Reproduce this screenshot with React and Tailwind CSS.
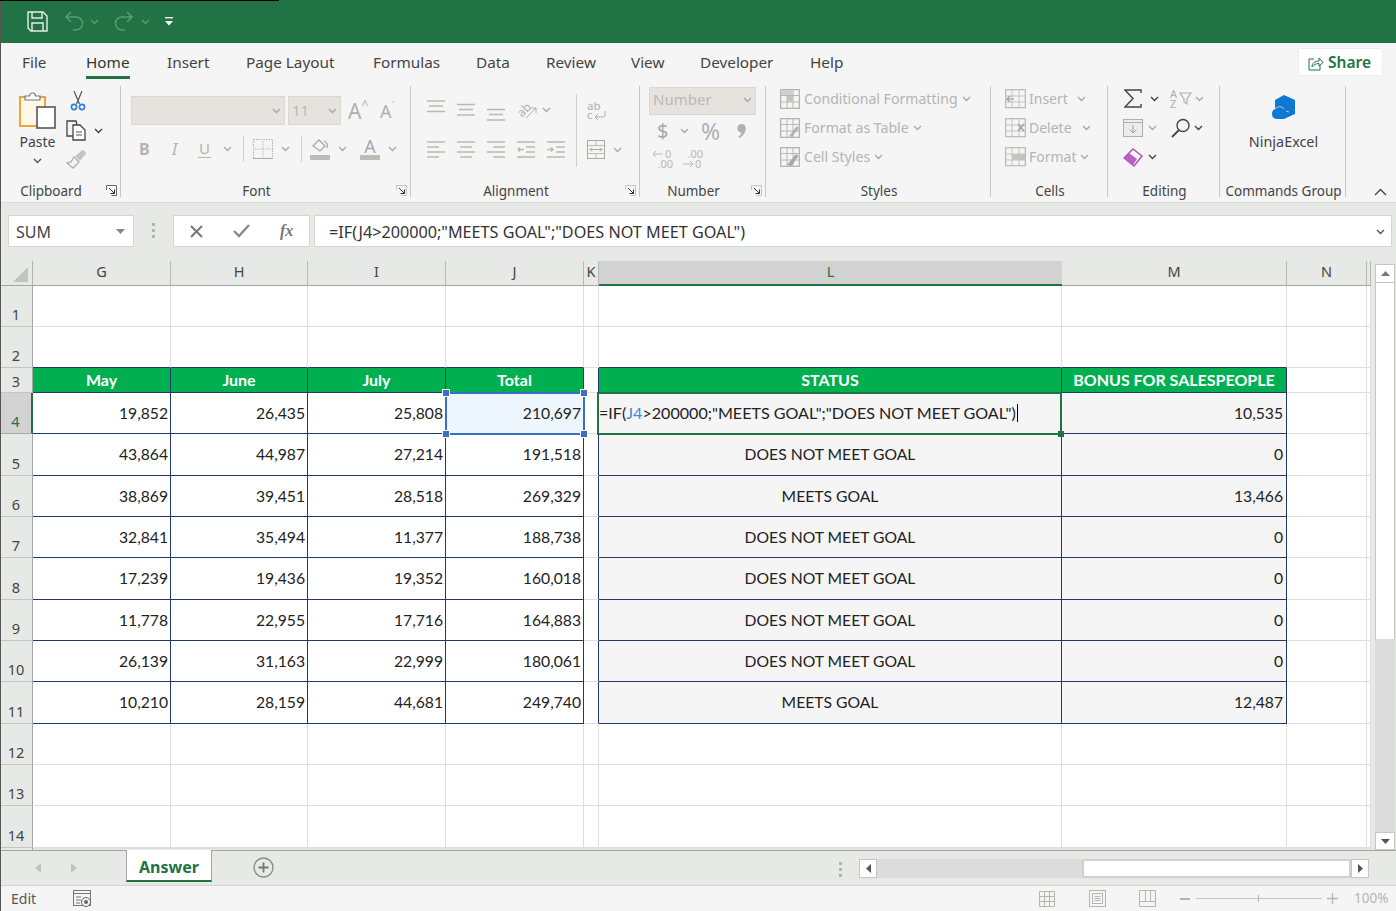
import React from "react";

const UI = "font-['Noto_Sans','Open_Sans',sans-serif]";
const CELL = "font-['Lato','Noto_Sans',sans-serif]";
const G = "#b8b8b4";

function Chev({ c = "#a8a8a8", className = "" }) {
  return (
    <svg width="9" height="6" viewBox="0 0 9 6" className={className}>
      <path d="M1 1l3.5 3.5L8 1" fill="none" stroke={c} strokeWidth="1.4" />
    </svg>
  );
}
function Launcher({ c = "#b4b4b4" }) {
  return (
    <svg width="11" height="11" viewBox="0 0 11 11" className="absolute right-[3px] bottom-[1px]">
      <path d="M.5 5V.5H10.5V10.5H5.5" fill="none" stroke={c} />
      <path d="M3 3l5.5 5.5M8.5 4.5v4h-4" fill="none" stroke={c === "#b4b4b4" ? "#b4b4b4" : "#333"} />
    </svg>
  );
}
function Group({ w, label, launcher, children, last }) {
  return (
    <div className={`relative flex h-full shrink-0 flex-col ${w} ${last ? "" : "border-r border-[#c8c8c4]"}`}>
      <div className="h-[97px] shrink-0">{children}</div>
      <div className={`h-[14px] shrink-0 pt-[1px] text-center text-[13.5px] leading-[15px] text-[#444] whitespace-nowrap ${launcher ? "pr-[18px]" : "pl-[2px]"}`}>{label}</div>
      {launcher && <Launcher c={launcher} />}
    </div>
  );
}
function Lines({ rows, h = 22 }) {
  return (
    <svg width="18" height={h} viewBox={`0 0 18 ${h}`} className="shrink-0">
      {rows.map(([y, x1, x2], i) => (
        <line key={i} x1={x1} x2={x2} y1={y} y2={y} stroke={G} strokeWidth="1.5" />
      ))}
    </svg>
  );
}
function TableIcon({ kind }) {
  return (
    <svg width="20" height="20" viewBox="0 0 20 20" className="shrink-0">
      <rect x=".7" y=".7" width="18.6" height="18.6" fill="none" stroke="#adadaa" strokeWidth="1.2" />
      <path d="M.7 6.5H19.3M.7 13H19.3M7 .7V19.3M13 .7V19.3" stroke="#b8b8b4" strokeWidth="1" fill="none" />
      {kind === "cf" && <rect x="7" y="7" width="6" height="6" fill="#c2c2be" />}
      {kind === "cf" && <rect x="1" y="1" width="12" height="5" fill="#cfcfcb" />}
      {kind === "ft" && <path d="M9 18l8-10 2 2-7 9z" fill="#b2b2ae" />}
      {kind === "cs" && <path d="M7 18l9-11 2.5 2-7 10z" fill="#a8a8a4" />}
    </svg>
  );
}
function CellsIcon({ kind }) {
  return (
    <svg width="21" height="20" viewBox="0 0 21 20" className="shrink-0">
      <rect x=".7" y=".7" width="19.6" height="18" fill="none" stroke="#b2b2ae" strokeWidth="1.1" />
      <path d="M.7 7H20.3M.7 13H20.3M7 .7V18.7M14 .7V18.7" stroke="#c2c2be" strokeWidth="1" fill="none" />
      {kind === "ins" && <path d="M9 10H2m3-3l-3 3 3 3" stroke="#9c9c98" fill="none" strokeWidth="1.2" />}
      {kind === "del" && <path d="M13 6l6 7M19 6l-6 7" stroke="#9c9c98" fill="none" strokeWidth="1.2" />}
      {kind === "fmt" && <rect x="7" y="7" width="13" height="6" fill="#c4c4c0" />}
    </svg>
  );
}

function Ribbon() {
  return (
    <div className={`flex h-[123px] shrink-0 border-b border-[#dcdcd8] bg-[#f5f5f5] pt-[6px] pb-[5px] ${UI}`}>
      {/* Clipboard */}
      <Group w="w-[121px]" label="Clipboard" launcher="#666">
        <div className="flex">
          <div className="ml-[18px] flex w-[39px] flex-col items-center">
            <svg width="38" height="38" viewBox="0 0 38 38" className="mt-[5px]">
              <rect x="1" y="6" width="25" height="29" fill="#fff7e8" stroke="#eda53a" strokeWidth="2" />
              <path d="M6 9V5h4.5a3 3 0 0 1 6 0H21v4z" fill="#fff" stroke="#777" strokeWidth="1.2" />
              <rect x="18" y="16" width="18" height="21" fill="#fff" stroke="#555" strokeWidth="1.6" />
            </svg>
            <div className="mt-[4px] text-[14px] leading-[18px] text-[#444]">Paste</div>
            <Chev c="#555" className="mt-[7px]" />
          </div>
          <div className="ml-[9px] flex flex-col">
            <svg width="16" height="21" viewBox="0 0 16 21" className="ml-[4px] mt-[4px]">
              <path d="M4 1l5.5 13M12 1L6.5 14" stroke="#555" strokeWidth="1.2" fill="none" />
              <circle cx="4" cy="17" r="2.6" fill="none" stroke="#2f7fd0" strokeWidth="1.6" />
              <circle cx="12" cy="17" r="2.6" fill="none" stroke="#2f7fd0" strokeWidth="1.6" />
            </svg>
            <div className="mt-[9px] flex items-center">
              <svg width="21" height="21" viewBox="0 0 21 21">
                <path d="M8 16H1V1h9l1 4" fill="none" stroke="#444" strokeWidth="1.3" />
                <path d="M7 5h7l5 5v10H7z" fill="#fff" stroke="#444" strokeWidth="1.3" />
                <path d="M10 12h6M10 15h6" stroke="#555" />
              </svg>
              <Chev c="#444" className="ml-[7px]" />
            </div>
            <svg width="21" height="20" viewBox="0 0 21 20" className="mt-[8px]">
              <path d="M9 7l4-3 3-3 3 1 1 3-3 3-3 4z" fill="#c4c4c0" />
              <path d="M8 8l5 5-6 6-6-5 4-1z" fill="none" stroke="#b0b0ac" strokeWidth="1.4" />
            </svg>
          </div>
        </div>
      </Group>
      {/* Font */}
      <Group w="w-[290px]" label="Font" launcher="#c4c4c4">
        <div className="ml-[10px] mt-[10px] flex items-center">
          <div className="flex h-[29px] w-[154px] items-center justify-end border border-[#dbd8d3] bg-[#e6e3de] pr-[3px]">
            <Chev />
          </div>
          <div className="ml-[3px] flex h-[29px] w-[53px] items-center justify-between border border-[#dbd8d3] bg-[#e6e3de] pl-[3px] pr-[3px] text-[15px] text-[#b9b9b4]">
            11
            <Chev />
          </div>
          <div className="ml-[7px] flex w-[24px] items-start text-[21px] leading-[24px] text-[#b0b0ac]">
            A<span className="text-[12px] leading-[12px]">^</span>
          </div>
          <div className="ml-[8px] flex w-[20px] items-start text-[18px] leading-[24px] text-[#b0b0ac]">
            A<span className="text-[11px] leading-[11px]">˅</span>
          </div>
        </div>
        <div className="mt-[10px] flex h-[27px] items-center">
          <span className="ml-[18px] w-[13px] text-[16px] font-bold text-[#b4b4b0]">B</span>
          <span className="ml-[20px] w-[9px] text-[16px] italic text-[#b4b4b0]">I</span>
          <span className="ml-[17px] w-[13px] border-b border-[#b4b4b0] text-center text-[15px] leading-[18px] text-[#b4b4b0]">U</span>
          <Chev className="ml-[12px]" />
          <div className="ml-[11px] h-[26px] w-px bg-[#d0d0cc]" />
          <svg width="20" height="20" viewBox="0 0 20 20" className="ml-[9px]">
            <rect x=".5" y=".5" width="19" height="19" fill="none" stroke="#b0b0ac" strokeDasharray="1.5 1" />
            <path d="M10 2v16M2 10h16" stroke="#b8b8b4" strokeDasharray="1.5 1" />
            <path d="M0 19.5h20" stroke="#a8a8a4" />
          </svg>
          <Chev className="ml-[8px]" />
          <div className="ml-[11px] h-[26px] w-px bg-[#d0d0cc]" />
          <svg width="20" height="22" viewBox="0 0 20 22" className="ml-[8px]">
            <path d="M3 8l6-6 6 6-5 5z" fill="none" stroke="#a8a8a4" strokeWidth="1.3" />
            <path d="M14 3c3 1 4 4 3 7" fill="none" stroke="#a8a8a4" strokeWidth="1.3" />
            <rect x="0" y="17" width="20" height="5" fill="#bcbcb8" />
          </svg>
          <Chev className="ml-[8px]" />
          <div className="ml-[13px] flex w-[20px] flex-col items-center">
            <span className="text-[18px] leading-[18px] text-[#a8a8a4]">A</span>
            <div className="h-[5px] w-[20px] bg-[#bcbcb8]" />
          </div>
          <Chev className="ml-[8px]" />
        </div>
      </Group>
      {/* Alignment */}
      <Group w="w-[229px]" label="Alignment" launcher="#c4c4c4">
        <div className="flex">
          <div className="ml-[16px] flex flex-col">
            <div className="mt-[14px] flex h-[22px] items-start gap-[12px]">
              <Lines rows={[[1, 0, 18], [6, 2, 16], [11.5, 0, 18]]} />
              <Lines rows={[[4.5, 0, 18], [9.5, 2, 16], [15, 0, 18]]} />
              <Lines rows={[[9.5, 0, 18], [14.5, 2, 16], [20, 0, 18]]} />
              <div className="relative flex h-[20px] w-[22px] items-center">
                <span className="-rotate-45 text-[12px] leading-[12px] text-[#b0b0ac]">ab</span>
                <svg width="13" height="13" viewBox="0 0 13 13" className="absolute left-[8px] top-[6px]">
                  <path d="M1 12L11 2M6 2h5v5" fill="none" stroke="#b0b0ac" />
                </svg>
              </div>
              <Chev className="-ml-[9px] mt-[7px]" />
            </div>
            <div className="mt-[19px] flex items-start gap-[12px]">
              <Lines rows={[[1, 0, 18], [6, 0, 12], [11, 0, 18], [16, 0, 12]]} h={18} />
              <Lines rows={[[1, 0, 18], [6, 3, 15], [11, 0, 18], [16, 3, 15]]} h={18} />
              <Lines rows={[[1, 0, 18], [6, 6, 18], [11, 0, 18], [16, 6, 18]]} h={18} />
              <svg width="18" height="18" viewBox="0 0 18 18" className="shrink-0">
                <path d="M0 1h18M9 6h9M9 11h9M0 16h18M1 8.5h6M3 6.5l-2 2 2 2" fill="none" stroke={G} strokeWidth="1.5" />
              </svg>
              <svg width="18" height="18" viewBox="0 0 18 18" className="shrink-0">
                <path d="M0 1h18M9 6h9M9 11h9M0 16h18M0 8.5h6M4 6.5l2 2-2 2" fill="none" stroke={G} strokeWidth="1.5" />
              </svg>
            </div>
          </div>
          <div className="ml-[11px] mt-[8px] h-[73px] w-px bg-[#d0d0cc]" />
          <div className="ml-[10px] flex flex-col">
            <svg width="20" height="20" viewBox="0 0 20 20" className="mt-[15px] overflow-visible">
              <text x="0" y="8.5" fontSize="11.5" fill="#b0b0ac">ab</text>
              <text x="0" y="18" fontSize="11.5" fill="#b0b0ac">c</text>
              <path d="M18 10v4a2 2 0 0 1-2 2H8m3-3l-3 3 3 3" fill="none" stroke="#b0b0ac" />
            </svg>
            <div className="mt-[19px] flex items-center">
              <svg width="18" height="19" viewBox="0 0 18 19">
                <rect x=".5" y=".5" width="17" height="18" fill="none" stroke="#a8a8a4" />
                <path d="M.5 5.5h17M.5 13.5h17M9 .5v5M9 13.5v5" stroke="#bcbcb8" />
                <path d="M3 9.5h12M5 7.5l-2 2 2 2M13 7.5l2 2-2 2" fill="none" stroke="#a8a8a4" />
              </svg>
              <Chev className="ml-[8px]" />
            </div>
          </div>
        </div>
      </Group>
      {/* Number */}
      <Group w="w-[126px]" label="Number" launcher="#c4c4c4">
        <div className="ml-[9px] mt-[1px] flex h-[28px] w-[107px] items-center justify-between border border-[#dbd8d3] bg-[#e6e3de] pb-[3px] pl-[3px] pr-[3px] text-[15px] text-[#b9b9b4]">
          Number
          <Chev />
        </div>
        <div className="mt-[2px] flex h-[27px] items-center">
          <span className="ml-[17px] w-[11px] text-[20px] text-[#a8a8a4]">$</span>
          <Chev className="ml-[12px]" />
          <span className="ml-[12px] w-[20px] text-[23px] leading-[24px] text-[#b0b0ac]">%</span>
          <svg width="9" height="14" viewBox="0 0 9 14" className="ml-[16px]">
            <path d="M4.5 0a4.2 4.2 0 0 1 4.2 4.5C8.7 8.5 6 12 2 14l-.8-1c2-1.5 3-3 3.3-4.5A4.2 4.2 0 0 1 4.5 0z" fill="#b0b0ac" />
          </svg>
        </div>
        <div className="mt-[5px] flex items-start">
          <svg width="20" height="20" viewBox="0 0 20 20" className="ml-[13px] overflow-visible">
            <path d="M0 5h10M3 2L0 5l3 3" fill="none" stroke="#b8b8b4" />
            <text x="12" y="9" fontSize="11" fill="#b8b8b4">0</text>
            <text x="20" y="19" fontSize="11" fill="#b8b8b4" textAnchor="end">.00</text>
          </svg>
          <svg width="20" height="20" viewBox="0 0 20 20" className="ml-[10px] overflow-visible">
            <text x="20" y="9" fontSize="11" fill="#b8b8b4" textAnchor="end">.00</text>
            <path d="M0 15h10M7 12l3 3-3 3" fill="none" stroke="#b8b8b4" />
            <text x="12" y="19" fontSize="11" fill="#b8b8b4">0</text>
          </svg>
        </div>
      </Group>
      {/* Styles */}
      <Group w="w-[225px]" label="Styles">
        <div className="-mt-[2px] ml-[14px] flex flex-col text-[14.1px] text-[#b4b4b0]">
          {[
            ["cf", "Conditional Formatting"],
            ["ft", "Format as Table"],
            ["cs", "Cell Styles"],
          ].map(([k, t]) => (
            <div key={k} className="flex h-[29px] items-center whitespace-nowrap">
              <TableIcon kind={k} />
              <span className="ml-[4px]">{t}</span>
              <Chev className="ml-[4px]" />
            </div>
          ))}
        </div>
      </Group>
      {/* Cells */}
      <Group w="w-[117px]" label="Cells">
        <div className="-mt-[2px] ml-[14px] flex flex-col text-[14px] text-[#b4b4b0]">
          {[
            ["ins", "Insert", "ml-[9px]"],
            ["del", "Delete", "ml-[10px]"],
            ["fmt", "Format", "ml-[3px]"],
          ].map(([k, t, m]) => (
            <div key={k} className="flex h-[29px] items-center">
              <CellsIcon kind={k} />
              <span className="ml-[3px]">{t}</span>
              <Chev className={m} />
            </div>
          ))}
        </div>
      </Group>
      {/* Editing */}
      <Group w="w-[112px]" label="Editing">
        <div className="-mt-[2px] ml-[15px] flex">
          <div className="flex w-[47px] flex-col">
            <div className="flex h-[29px] items-center">
              <svg width="18" height="19" viewBox="0 0 18 19" className="ml-[1px]">
                <path d="M17 4V1H1l8 8.5L1 18h16v-3" fill="none" stroke="#444" strokeWidth="1.4" />
              </svg>
              <Chev c="#444" className="ml-[8px]" />
            </div>
            <div className="flex h-[29px] items-center">
              <svg width="20" height="18" viewBox="0 0 20 18">
                <rect x=".5" y=".5" width="19" height="17" fill="#ececea" stroke="#aeaeaa" />
                <path d="M1 3.5h18" stroke="#aeaeaa" />
                <path d="M10 6v8M6.5 10.5l3.5 3.5 3.5-3.5" fill="none" stroke="#a0a09c" />
              </svg>
              <Chev className="ml-[5px]" />
            </div>
            <div className="flex h-[29px] items-center">
              <svg width="20" height="20" viewBox="0 0 20 20">
                <path d="M1 11l9-9 9 7-8 10z" fill="#fff" stroke="#b04cb8" strokeWidth="1.4" />
                <path d="M1 11l5-5 8 6-4 6z" fill="#c05cc8" />
              </svg>
              <Chev className="ml-[5px]" c="#444" />
            </div>
          </div>
          <div className="flex flex-col">
            <div className="flex h-[29px] items-center">
              <svg width="22" height="20" viewBox="0 0 22 20" className="overflow-visible">
                <text x="0" y="9" fontSize="11" fill="#b0b0ac">A</text>
                <text x="0" y="19" fontSize="11" fill="#b0b0ac">Z</text>
                <path d="M10 4h11l-4 6v5l-3-2v-3z" fill="none" stroke="#b0b0ac" strokeWidth="1.2" />
              </svg>
              <Chev className="ml-[3px]" />
            </div>
            <div className="flex h-[29px] items-center">
              <svg width="21" height="20" viewBox="0 0 21 20">
                <circle cx="13" cy="7.5" r="6" fill="none" stroke="#444" strokeWidth="1.4" />
                <path d="M9 12l-7 7" stroke="#444" strokeWidth="1.8" />
              </svg>
              <Chev c="#444" className="ml-[3px]" />
            </div>
          </div>
        </div>
      </Group>
      {/* Commands */}
      <Group w="w-[126px]" label="Commands Group">
        <div className="flex flex-col items-center">
          <svg width="24" height="25" viewBox="0 0 24 25" className="ml-[2px] mt-[9px]">
            <path d="M12 0l11 5v14l-11 5H6c-4 0-6-2-6-5s1-4 3-5V5z" fill="#0f78d4" />
            <path d="M3 14c3-3 7-3 9 0M14 16l3 1" fill="none" stroke="#cfe5f8" strokeWidth=".8" />
          </svg>
          <div className="ml-[2px] mt-[13px] text-[14.4px] leading-[18px] text-[#444]">NinjaExcel</div>
        </div>
      </Group>
      <div className="flex flex-1 items-end justify-end pr-[9px]">
        <svg width="13" height="8" viewBox="0 0 13 8" className="mb-[1px]">
          <path d="M1 7l5.5-5.5L12 7" fill="none" stroke="#444" strokeWidth="1.4" />
        </svg>
      </div>
    </div>
  );
}

function FormulaBar() {
  return (
    <div className={`flex h-[58px] shrink-0 items-start bg-[#e6e9e6] pt-[12px] ${UI}`}>
      <div className="ml-[8px] flex h-[32px] w-[126px] items-center justify-between border border-[#d4d6d4] bg-white pl-[7px] pr-[8px] pt-[1px] text-[16px] text-[#444]">
        SUM
        <svg width="9" height="5" viewBox="0 0 9 5"><path d="M0 0h9L4.5 5z" fill="#888" /></svg>
      </div>
      <div className="ml-[18px] mt-[8px] flex w-[3px] flex-col gap-[3px]">
        <div className="h-[3px] w-[3px] bg-[#b4b4b4]" />
        <div className="h-[3px] w-[3px] bg-[#b4b4b4]" />
        <div className="h-[3px] w-[3px] bg-[#b4b4b4]" />
      </div>
      <div className="ml-[18px] flex h-[32px] w-[137px] items-center border border-[#d4d6d4] bg-white">
        <svg width="15" height="15" viewBox="0 0 15 15" className="ml-[15px]">
          <path d="M2 2l11 11M13 2L2 13" stroke="#777" strokeWidth="2" />
        </svg>
        <svg width="17" height="14" viewBox="0 0 17 14" className="ml-[29px]">
          <path d="M1 7l5 5L16 1" fill="none" stroke="#888" strokeWidth="2.4" />
        </svg>
        <span className="ml-[30px] font-['Liberation_Serif',serif] text-[16px] italic font-bold text-[#777]">fx</span>
      </div>
      <div className="ml-[4px] flex h-[32px] w-[1078px] items-center justify-between border border-[#d4d6d4] bg-white pl-[14px] pr-[5px] pt-[2px] text-[16.2px] text-[#333]">
        <span className="whitespace-nowrap">=IF(J4&gt;200000;"MEETS GOAL";"DOES NOT MEET GOAL")</span>
        <Chev c="#555" className="w-[11px]" />
      </div>
    </div>
  );
}

const COLS = ["G", "H", "I", "J", "K", "L", "M", "N", ""];
const HEIGHTS = ["h-[41px]", "h-[41px]", "h-[25px]", "h-[41px]", "h-[42px]", "h-[41px]", "h-[41px]", "h-[42px]", "h-[41px]", "h-[41px]", "h-[42px]", "h-[41px]", "h-[41px]", "h-[42px]", "h-[1px]"];
const HEAD = { 0: "May", 1: "June", 2: "July", 3: "Total", 5: "STATUS", 6: "BONUS FOR SALESPEOPLE" };
const DATA = [
  ["19,852", "26,435", "25,808", "210,697", "", "", "10,535"],
  ["43,864", "44,987", "27,214", "191,518", "", "DOES NOT MEET GOAL", "0"],
  ["38,869", "39,451", "28,518", "269,329", "", "MEETS GOAL", "13,466"],
  ["32,841", "35,494", "11,377", "188,738", "", "DOES NOT MEET GOAL", "0"],
  ["17,239", "19,436", "19,352", "160,018", "", "DOES NOT MEET GOAL", "0"],
  ["11,778", "22,955", "17,716", "164,883", "", "DOES NOT MEET GOAL", "0"],
  ["26,139", "31,163", "22,999", "180,061", "", "DOES NOT MEET GOAL", "0"],
  ["10,210", "28,159", "44,681", "249,740", "", "MEETS GOAL", "12,487"],
];
const inTable = (r, c) => r >= 2 && r <= 10 && c >= 0 && c <= 6 && c !== 4;
function borderCls(r, c) {
  const right = inTable(r, c) || inTable(r, c + 1);
  const bottom = inTable(r, c) || inTable(r + 1, c);
  const rc = right ? "border-r-[#22386b]" : "border-r-[#dedfde]";
  const bc = bottom ? "border-b-[#22386b]" : "border-b-[#dedfde]";
  return `border-r border-b ${rc} ${bc}`;
}
function Handle({ className }) {
  return <div className={`absolute h-[8px] w-[8px] border border-white bg-[#3a6fc4] ${className}`} />;
}

function Sheet() {
  return (
    <div className="w-[1371px] shrink-0">
      <div className={`grid grid-cols-[33px_138px_137px_138px_138px_15px_463px_225px_80px_4px] ${UI}`}>
        {/* Column headers */}
        <div className="flex h-[25px] items-end justify-end border-r border-b border-r-[#b4b4b4] border-b-[#a4a6a4] pb-[3px] pr-[4px]">
          <svg width="15" height="15" viewBox="0 0 15 15"><path d="M15 0v15H0z" fill="#c2c4c2" /></svg>
        </div>
        {COLS.map((c, i) => (
          <div
            key={i}
            className={
              c === "L"
                ? "flex h-[25px] items-center justify-center border-b-2 border-b-[#217346] bg-[#d2d2d2] pb-[1px] text-[14.5px] text-[#217346]"
                : "flex h-[25px] items-center justify-center border-r border-b border-r-[#b8bab8] border-b-[#a4a6a4] pb-[2px] text-[14.5px] text-[#444]"
            }
          >
            {c}
          </div>
        ))}
        {HEIGHTS.map((h, r) => (
          <React.Fragment key={r}>
            <div
              className={
                r === 3
                  ? `flex items-end justify-center border-r-2 border-b border-r-[#217346] border-b-[#a8aaa8] bg-[#d2d2d2] pb-[2px] text-[14.5px] leading-[19px] text-[#217346] ${h}`
                  : `flex items-end justify-center overflow-hidden border-r border-b border-r-[#a4a6a4] border-b-[#c4c6c4] text-[14.5px] leading-[19px] text-[#444] ${r === 2 ? "pb-[1px]" : "pb-[2px]"} ${h}`
              }
            >
              {r < 14 ? r + 1 : ""}
            </div>
            {COLS.map((_, c) => {
              const border = borderCls(r, c);
              if (r === 2 && c in HEAD) {
                return (
                  <div key={c} className={`flex items-center justify-center bg-[#00b050] text-[16px] font-bold text-white ${CELL} ${h} ${border}`}>
                    {HEAD[c]}
                  </div>
                );
              }
              if (r >= 3 && r <= 10 && c <= 6 && c !== 4) {
                const val = DATA[r - 3][c];
                const gray = c >= 5;
                if (r === 3 && c === 3) {
                  return (
                    <div key={c} className={`relative flex items-center justify-end bg-white pt-[2px] pr-[2px] text-[15.7px] text-[#222] ${CELL} ${h} ${border}`}>
                      <div className="absolute -top-[1px] -left-[1px] -right-[2px] -bottom-[2px] border-2 border-[#3a6fc4] bg-[#eef6fd]" />
                      <span className="relative">{val}</span>
                      <Handle className="-left-[4px] -top-[4px]" />
                      <Handle className="-right-[5px] -top-[4px]" />
                      <Handle className="-left-[4px] -bottom-[5px]" />
                      <Handle className="-right-[5px] -bottom-[5px]" />
                    </div>
                  );
                }
                if (r === 3 && c === 5) {
                  return (
                    <div key={c} className={`relative flex items-center whitespace-nowrap bg-[#f5f5f5] text-[16.1px] text-[#222] ${CELL} ${h} ${border}`}>
                      <div className="absolute -top-[1px] -left-[2px] -right-[1px] -bottom-[2px] border-2 border-[#217346]" />
                      <span className="relative">
                        =IF(<span className="text-[#4a86d8]">J4</span>&gt;200000;"MEETS GOAL";"DOES NOT MEET GOAL")
                      </span>
                      <div className="relative ml-[1px] h-[18px] w-px bg-black" />
                      <div className="absolute -right-[3px] -bottom-[4px] h-[6px] w-[6px] bg-[#217346]" />
                    </div>
                  );
                }
                return (
                  <div
                    key={c}
                    className={`flex items-center pt-[1px] text-[15.7px] text-[#222] ${CELL} ${h} ${border} ${c === 5 ? "justify-center" : c === 6 ? "justify-end pr-[3px]" : "justify-end pr-[2px]"} ${gray ? "bg-[#f5f5f5]" : "bg-white"}`}
                  >
                    {val}
                  </div>
                );
              }
              return <div key={c} className={`bg-white ${h} ${border}`} />;
            })}
          </React.Fragment>
        ))}
      </div>
    </div>
  );
}

function ScrollV() {
  return (
    <div className="ml-[4px] mt-[3px] flex w-[20px] flex-col">
      <div className="flex h-[19px] items-center justify-center border border-[#c4c6c4] bg-white">
        <svg width="9" height="5" viewBox="0 0 9 5"><path d="M0 5h9L4.5 0z" fill="#777" /></svg>
      </div>
      <div className="h-[356px] border-x border-[#c4c6c4] bg-white" />
      <div className="flex-1 bg-[#dcdcdc]" />
      <div className="flex h-[18px] items-center justify-center border border-[#c4c6c4] bg-white">
        <svg width="9" height="5" viewBox="0 0 9 5"><path d="M0 0h9L4.5 5z" fill="#555" /></svg>
      </div>
    </div>
  );
}

function TabsRow() {
  return (
    <div className={`flex h-[35px] shrink-0 border-t border-[#a4a6a4] bg-[#e6e9e6] ${UI}`}>
      <svg width="6" height="10" viewBox="0 0 6 10" className="ml-[35px] mt-[12px]"><path d="M6 0v10L0 5z" fill="#c2c4c2" /></svg>
      <svg width="6" height="10" viewBox="0 0 6 10" className="ml-[30px] mt-[12px]"><path d="M0 0v10l6-5z" fill="#c2c4c2" /></svg>
      <div className="-mt-px ml-[49px] flex h-[32px] w-[86px] items-center justify-center border-x border-b-2 border-x-[#a4a6a4] border-b-[#217346] bg-white pt-[3px] text-[16px] font-bold text-[#217346]">
        Answer
      </div>
      <svg width="21" height="21" viewBox="0 0 21 21" className="ml-[41px] mt-[6px]">
        <circle cx="10.5" cy="10.5" r="9.5" fill="none" stroke="#888" strokeWidth="1.3" />
        <path d="M10.5 5.5v10M5.5 10.5h10" stroke="#777" strokeWidth="1.8" />
      </svg>
      <div className="ml-[565px] mt-[11px] flex w-[3px] flex-col gap-[3px]">
        <div className="h-[3px] w-[3px] bg-[#b4b4b4]" />
        <div className="h-[3px] w-[3px] bg-[#b4b4b4]" />
        <div className="h-[3px] w-[3px] bg-[#b4b4b4]" />
      </div>
      <div className="ml-[17px] mt-[8px] flex h-[19px] w-[510px]">
        <div className="flex w-[18px] items-center justify-center border border-[#c4c6c4] bg-white">
          <svg width="5" height="9" viewBox="0 0 5 9"><path d="M5 0v9L0 4.5z" fill="#555" /></svg>
        </div>
        <div className="w-[205px] bg-[#dcdcdc]" />
        <div className="flex-1 border-2 border-[#d0d2d0] bg-white" />
        <div className="flex w-[18px] items-center justify-center border border-[#c4c6c4] bg-white">
          <svg width="5" height="9" viewBox="0 0 5 9"><path d="M0 0v9l5-4.5z" fill="#555" /></svg>
        </div>
      </div>
    </div>
  );
}

function StatusBar() {
  return (
    <div className={`flex h-[26px] shrink-0 items-center border-t border-[#d4d4ce] bg-[#f5f5f5] ${UI}`}>
      <span className="ml-[11px] w-[26px] text-[14px] text-[#555]">Edit</span>
      <svg width="19" height="18" viewBox="0 0 19 18" className="ml-[36px]">
        <rect x=".5" y=".5" width="17" height="15" fill="none" stroke="#777" />
        <path d="M1 3.5h16M3 7h5M3 10h5M3 13h4" stroke="#777" />
        <circle cx="13" cy="12" r="4.5" fill="#f5f5f5" stroke="#666" />
        <circle cx="13" cy="12" r="2" fill="#666" />
      </svg>
      <svg width="16" height="16" viewBox="0 0 16 16" className="ml-[947px]">
        <path d="M.5.5h15v15H.5zM.5 5.5h15M.5 10.5h15M5.5.5v15M10.5.5v15" fill="none" stroke="#b4b4b0" />
      </svg>
      <svg width="17" height="17" viewBox="0 0 17 17" className="ml-[34px]">
        <rect x=".5" y=".5" width="16" height="16" fill="none" stroke="#b4b4b0" />
        <rect x="3.5" y="3.5" width="10" height="10" fill="none" stroke="#b4b4b0" />
        <path d="M5.5 6.5h6M5.5 8.5h6M5.5 10.5h6" stroke="#b4b4b0" />
      </svg>
      <svg width="17" height="17" viewBox="0 0 17 17" className="ml-[33px]">
        <path d="M.5.5h16v16H.5zM.5 11.5h16M6.5.5v11M11.5.5v11" fill="none" stroke="#b4b4b0" />
      </svg>
      <div className="ml-[24px] h-[2px] w-[10px] bg-[#b4b4b0]" />
      <div className="relative ml-[6px] h-[1.5px] w-[126px] bg-[#c4c4c0]">
        <div className="absolute left-[62px] -top-[3px] h-[7px] w-px bg-[#b4b4b0]" />
      </div>
      <svg width="11" height="11" viewBox="0 0 11 11" className="ml-[5px]"><path d="M5.5 0v11M0 5.5h11" stroke="#b4b4b0" strokeWidth="1.3" /></svg>
      <span className="ml-[16px] text-[13.5px] text-[#b4b4b0]">100%</span>
    </div>
  );
}

const TABS = [
  ["File", "w-[64px]"],
  ["Home", "w-[81px]"],
  ["Insert", "w-[79px]"],
  ["Page Layout", "w-[127px]"],
  ["Formulas", "w-[103px]"],
  ["Data", "w-[70px]"],
  ["Review", "w-[85px]"],
  ["View", "w-[69px]"],
  ["Developer", "w-[110px]"],
  ["Help", "w-[50px]"],
];

export default function App() {
  return (
    <div className={`relative flex h-[911px] w-[1396px] flex-col overflow-hidden bg-[#e6e9e6] ${UI}`}>
      <div className="absolute left-0 top-0 z-10 h-full w-px bg-[#555]" />
      <div className="absolute left-0 top-0 z-10 h-px w-[279px] bg-black" />
      {/* Title bar */}
      <div className="flex h-[43px] shrink-0 items-center bg-[#217346]">
        <svg width="21" height="21" viewBox="0 0 21 21" className="ml-[27px]">
          <path d="M1 1h15l4 4v15H4l-3-3z" fill="none" stroke="#e4efe8" strokeWidth="1.4" />
          <path d="M5 1v6h10V1M5 20v-8h11v8" fill="none" stroke="#e4efe8" strokeWidth="1.4" />
        </svg>
        <svg width="20" height="21" viewBox="0 0 20 21" className="ml-[16px]">
          <path d="M7 1L2 6l5 5M2 6h10a6.5 6.5 0 0 1 0 13H9" fill="none" stroke="#5a9a78" strokeWidth="1.5" />
        </svg>
        <Chev c="#5a9a78" className="ml-[6px]" />
        <svg width="20" height="21" viewBox="0 0 20 21" className="ml-[15px]">
          <path d="M13 1l5 5-5 5M18 6H8a6.5 6.5 0 0 0 0 13h3" fill="none" stroke="#5a9a78" strokeWidth="1.5" />
        </svg>
        <Chev c="#5a9a78" className="ml-[7px]" />
        <svg width="10" height="9" viewBox="0 0 10 9" className="ml-[14px]">
          <path d="M1 .7h8" stroke="#fff" strokeWidth="1.3" />
          <path d="M1 4h8L5 8.5z" fill="#fff" />
        </svg>
      </div>
      {/* Tabs */}
      <div className="flex h-[37px] shrink-0 items-start bg-[#f5f5f5] pl-[22px]">
        {TABS.map(([t, w]) => (
          <div key={t} className={`${w} flex shrink-0 items-start`}>
            <div className={t === "Home" ? "h-[36px] whitespace-nowrap border-b-[3px] border-[#217346] pt-[9px] text-[15.3px] leading-[20px] text-[#333]" : "whitespace-nowrap pt-[9px] text-[15.3px] leading-[20px] text-[#444]"}>
              {t}
            </div>
          </div>
        ))}
        <div className="flex flex-1 justify-end pt-[5px] pr-[13px]">
          <div className="flex h-[28px] w-[85px] items-center justify-center gap-[4px] rounded-[2px] border border-[#ececec] bg-white pt-[2px] pr-[2px] text-[15.5px] font-semibold text-[#217346]">
            <svg width="16" height="15" viewBox="0 0 16 15">
              <path d="M6 3H1v11h11V9" fill="none" stroke="#217346" />
              <path d="M4 11c0-4 3-6 7-6V2l4 4.5L11 10V7.5c-3 0-5 1-7 3.5z" fill="none" stroke="#217346" />
            </svg>
            Share
          </div>
        </div>
      </div>
      <Ribbon />
      <FormulaBar />
      <div className="flex h-[589px] shrink-0">
        <Sheet />
        <ScrollV />
      </div>
      <TabsRow />
      <StatusBar />
    </div>
  );
}
